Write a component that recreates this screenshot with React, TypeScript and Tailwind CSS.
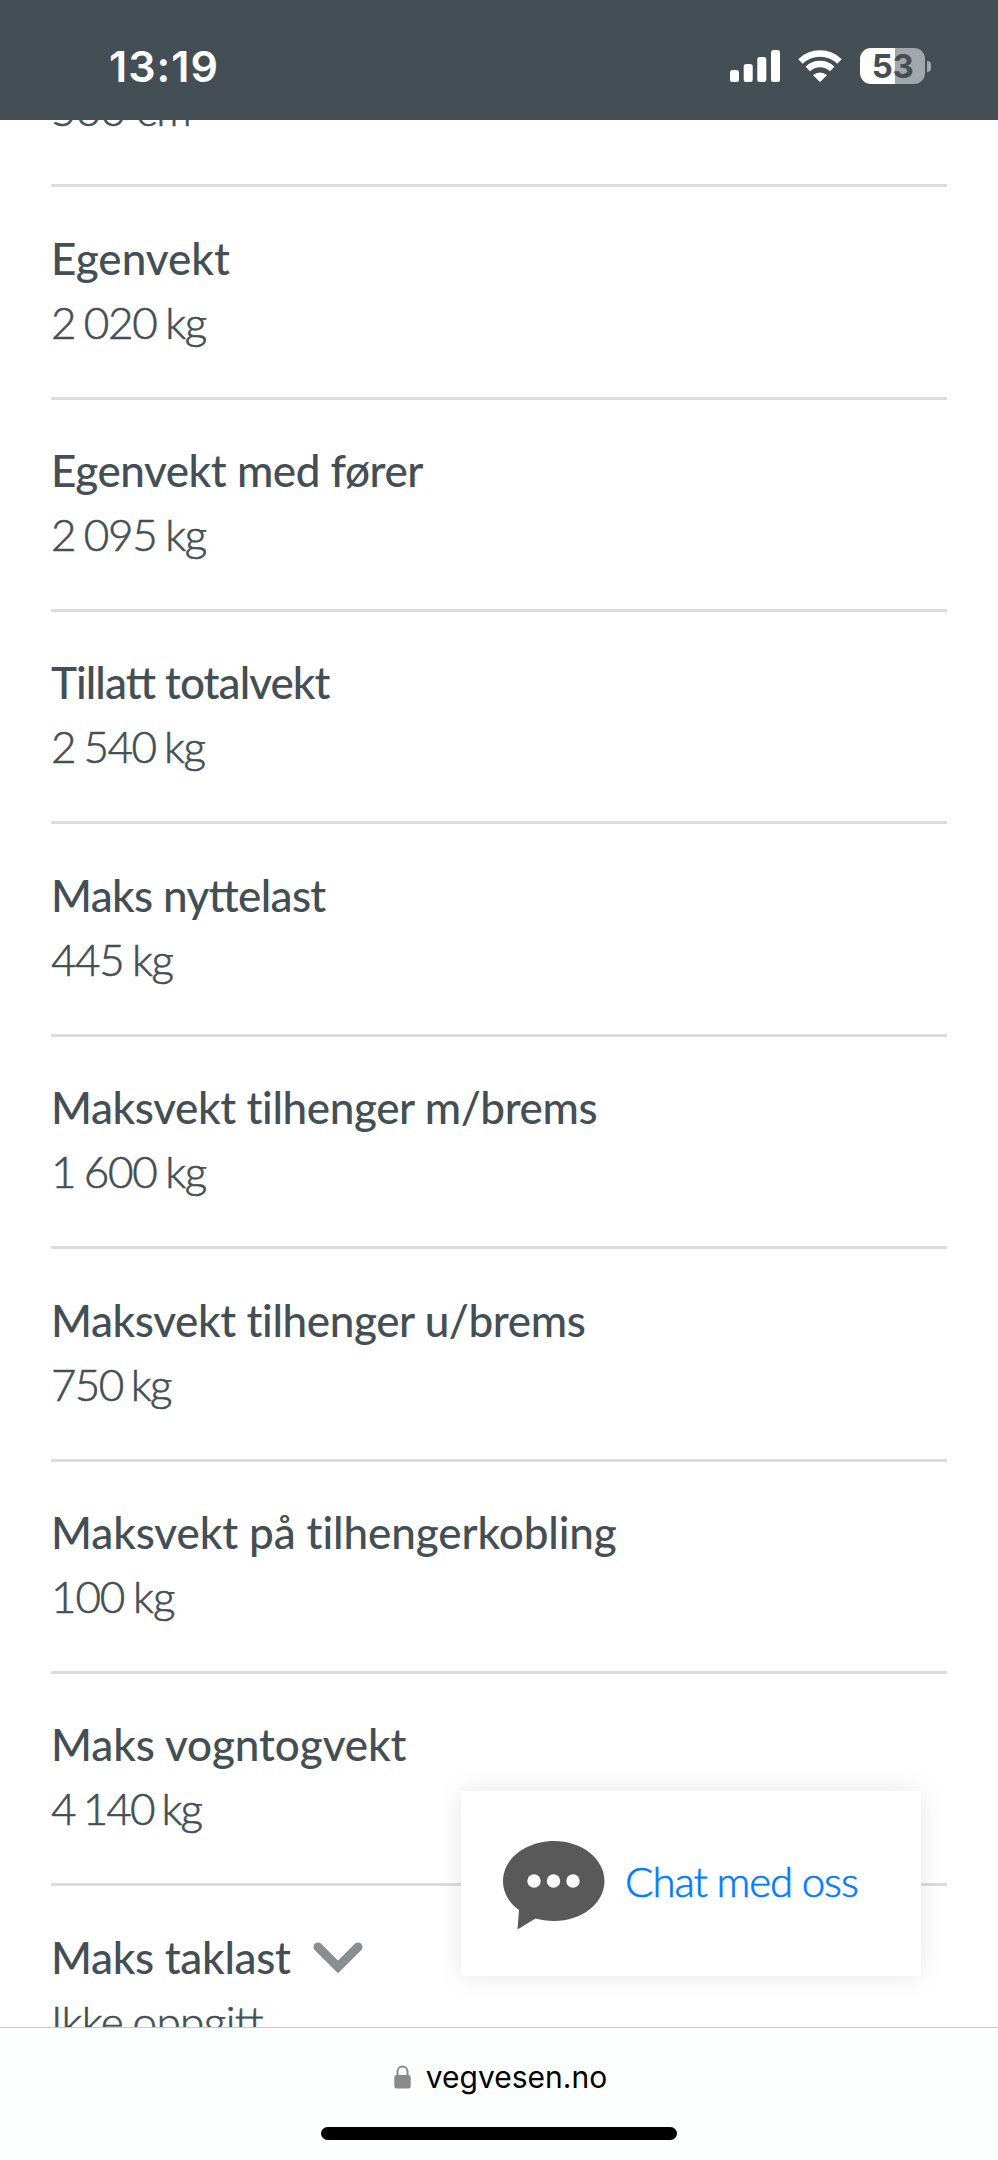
import { clsx } from "clsx";

type Row = { label: string; value: string; labelCls?: string; valueCls?: string; expandable?: boolean };

const ROWS: Row[] = [
  { label: "Egenvekt", value: "2 020 kg" },
  { label: "Egenvekt med fører", value: "2 095 kg", labelCls: "tracking-[-0.45px]" },
  { label: "Tillatt totalvekt", value: "2 540 kg", labelCls: "tracking-[-0.95px] [font-feature-settings:'liga'_1]", valueCls: "tracking-[-1.5px]" },
  { label: "Maks nyttelast", value: "445 kg", labelCls: "tracking-[-0.65px] [font-feature-settings:'liga'_1]", valueCls: "tracking-[-1.4px]" },
  { label: "Maksvekt tilhenger m/brems", value: "1 600 kg", labelCls: "tracking-[-0.38px]" },
  { label: "Maksvekt tilhenger u/brems", value: "750 kg", labelCls: "tracking-[-0.38px]", valueCls: "tracking-[-1.7px]" },
  { label: "Maksvekt på tilhengerkobling", value: "100 kg", labelCls: "tracking-[-0.1px]", valueCls: "tracking-[-1.1px]" },
  { label: "Maks vogntogvekt", value: "4 140 kg", labelCls: "tracking-[-0.05px]", valueCls: "tracking-[-1.9px]" },
  { label: "Maks taklast", value: "Ikke oppgitt", labelCls: "tracking-[-0.3px]", valueCls: "tracking-[-0.6px] [font-feature-settings:'liga'_1]", expandable: true },
];

function StatusBar() {
  return (
    <header className="z-10 flex h-[120px] shrink-0 items-start justify-between bg-[#444f55] pl-[109px] pr-[67px] font-['Inter'] text-white">
      <span className="mt-[41px] text-[43px] font-semibold leading-[50px] tracking-[1px]">13:19</span>
      <div className="mt-12 flex h-9 items-center">
        <svg width="50" height="32" viewBox="0 0 50 32" fill="currentColor" aria-hidden="true">
          <rect x="0" y="20" width="9" height="12" rx="2.5" />
          <rect x="13.7" y="14" width="9" height="18" rx="2.5" />
          <rect x="27.3" y="7" width="9" height="25" rx="2.5" />
          <rect x="41" y="0" width="9" height="32" rx="2.5" />
        </svg>
        <svg className="ml-[18px]" width="44" height="32" viewBox="0 0 44 32" fill="none" stroke="currentColor" aria-hidden="true">
          <path d="M2.5 11.5a28 28 0 0 1 39 0" strokeWidth="6.5" />
          <path d="M9.8 19a17.5 17.5 0 0 1 24.4 0" strokeWidth="6.5" />
          <path d="M15 25.3a10 10 0 0 1 14 0L22 32z" fill="currentColor" stroke="none" />
        </svg>
        <div className="ml-[18px] flex h-9 w-[65px] items-center justify-center rounded-[11px] bg-linear-to-r from-white from-[35px] to-[#a2a7ab] to-[35px] text-[33px] font-bold leading-none tracking-[-0.5px] text-[#444f55]">
          53
        </div>
        <span className="ml-0.5 h-[11px] w-1 rounded-r-full bg-[#a2a7ab]" />
      </div>
    </header>
  );
}

function DataRow({ row }: { row: Row }) {
  return (
    <div className="h-[212.4px] border-b-3 border-[#dcdcdc] pt-[38.5px] leading-[64px]">
      <dt className="flex items-center whitespace-nowrap font-medium">
        <span className={clsx(row.labelCls)}>{row.label}</span>
        {row.expandable && (
          <svg className="ml-[22px] mt-0.5" width="50" height="32" viewBox="0 0 50 32" aria-hidden="true">
            <path d="M5 5l20 20L45 5" fill="none" stroke="#888f93" strokeWidth="9" strokeLinecap="round" />
          </svg>
        )}
      </dt>
      <dd className={clsx("whitespace-nowrap font-light [-webkit-text-stroke:0.6px] [word-spacing:-2px]", row.valueCls ?? "tracking-[-1.3px]")}>
        {row.value}
      </dd>
    </div>
  );
}

function ChatButton() {
  return (
    <button className="absolute left-[461px] top-[1791px] z-10 flex h-[185px] w-[460px] items-center bg-white pl-[41px] shadow-[0_0_24px_rgba(0,0,0,0.1)]">
      <svg className="mt-1" width="103" height="89" viewBox="0 0 103 89" aria-hidden="true">
        <path d="M52 0C80 0 102.500 17.800 102.500 40S80 80 52 80c-6.500 0-13-1-18.500-2.500L15.500 88.500 17 69C7 62 1 51.500 1 40 1 17.800 24 0 52 0z" fill="#595959" />
        <circle cx="32" cy="40" r="6.700" fill="#fff" />
        <circle cx="51.500" cy="40" r="6.700" fill="#fff" />
        <circle cx="71" cy="40" r="6.700" fill="#fff" />
      </svg>
      <span className="mb-[5px] ml-5 whitespace-nowrap text-[42px] font-light leading-[64px] tracking-[-1px] text-[#007bff] [-webkit-text-stroke:0.6px] [word-spacing:-1px]">
        Chat med oss
      </span>
    </button>
  );
}

function AddressBar() {
  return (
    <footer className="z-10 flex h-[133px] shrink-0 flex-col items-center border-t border-[#c8c9ca] bg-[#fdfefe]">
      <div className="mt-[27px] flex h-[44px] items-center pl-[3px]">
        <svg className="mr-[15px]" width="17" height="24" viewBox="0 0 17 24" aria-hidden="true">
          <path d="M3.500 11V6.500a5 5 0 0 1 10 0V11" fill="none" stroke="#8a898e" strokeWidth="2" />
          <rect x="0.300" y="10" width="16.400" height="13.500" rx="2.500" fill="#8a898e" />
        </svg>
        <span className="font-['Inter'] text-[30px] leading-[44px] text-black">vegvesen.no</span>
      </div>
      <div className="mt-[28px] h-[13px] w-[356px] rounded-full bg-black" />
    </footer>
  );
}

export default function App() {
  return (
    <div className="relative flex h-[2160px] w-[998px] flex-col overflow-hidden bg-white font-['Lato',sans-serif]">
      <StatusBar />
      <main className="min-h-0 flex-1 overflow-hidden px-[51px] text-[44px] text-[#444f55]">
        {/* tail of the previous row, scrolled under the status bar */}
        <div className="mt-[-43px] h-[110.2px] border-b-3 border-[#dcdcdc] font-light leading-[64px] tracking-[-0.8px] [-webkit-text-stroke:0.6px]">
          500 cm
        </div>
        <dl>
          {ROWS.map((row) => (
            <DataRow key={row.label} row={row} />
          ))}
        </dl>
      </main>
      <ChatButton />
      <AddressBar />
    </div>
  );
}
